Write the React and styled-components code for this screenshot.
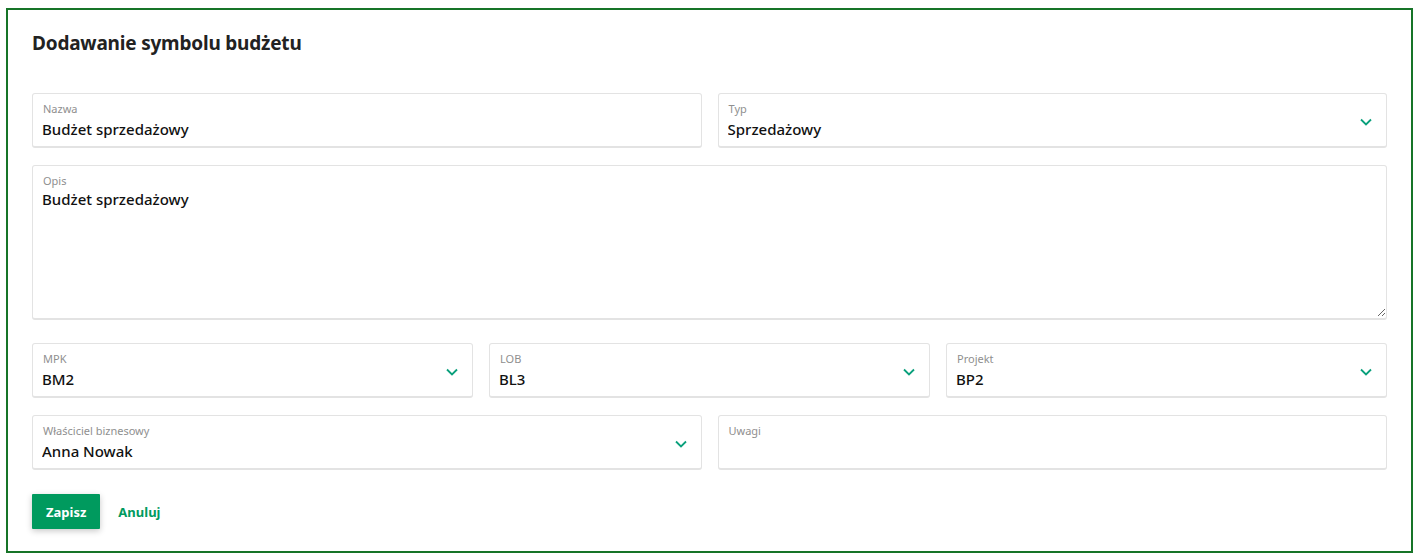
import React from 'react'
import styled, { createGlobalStyle } from 'styled-components'

const GlobalStyle = createGlobalStyle`
  body {
    margin: 0;
    background: #fff;
    font-family: "Noto Sans", "Liberation Sans", sans-serif;
    color: #1a1a1a;
  }
`

const Panel = styled.div`
  margin: 8px 6px 0 6px;
  border: 2px solid #177428;
  padding: 19px 24px 22px 24px;
  height: 545px;
  box-sizing: border-box;
`

const Title = styled.h2`
  margin: 0;
  font-size: 19px;
  line-height: 28px;
  font-weight: 700;
  color: #222;
  letter-spacing: -0.2px;
`

const Row = styled.div`
  display: grid;
  grid-template-columns: repeat(${p => p.cols}, 1fr);
  gap: 16px;
  margin-top: ${p => p.gap}px;
`

const Box = styled.label`
  position: relative;
  display: flex;
  flex-direction: column;
  height: ${p => p.h || 55}px;
  box-sizing: border-box;
  border: 1px solid #e3e3e3;
  border-bottom-width: 2px;
  border-radius: 3px;
  background: #fff;
  cursor: pointer;
`

const Label = styled.span`
  display: block;
  padding: 7px 10px 0 10px;
  font-size: 11px;
  line-height: 15px;
  color: #8f8f8f;
`

const Value = styled.input`
  border: none;
  outline: none;
  padding: 2px 40px 0 9px;
  font-family: inherit;
  font-size: 15px;
  font-weight: 500;
  line-height: 22px;
  color: #111;
  background: transparent;
  width: 100%;
  box-sizing: border-box;
  cursor: inherit;
`

const Area = styled.textarea`
  flex: 1;
  border: none;
  outline: none;
  padding: 0 9px;
  margin: 0 0 1px 0;
  font-family: inherit;
  font-size: 15px;
  font-weight: 500;
  line-height: 22px;
  color: #111;
  resize: vertical;
  background: transparent;
`

const Chevron = styled.svg`
  position: absolute;
  right: 14px;
  top: 24px;
  width: 12px;
  height: 8px;
`

const Actions = styled.div`
  display: flex;
  align-items: center;
  gap: 18px;
  margin-top: 24px;
`

const SaveButton = styled.button`
  height: 35px;
  padding: 0 14px;
  border: none;
  border-radius: 1px;
  background: #009a5e;
  color: #fff;
  font-family: inherit;
  font-size: 13px;
  font-weight: 700;
  box-shadow: 0 2px 6px rgba(0, 0, 0, 0.22);
  cursor: pointer;
`

const CancelButton = styled.button`
  border: none;
  background: none;
  padding: 0;
  color: #009a5e;
  font-family: inherit;
  font-size: 13px;
  font-weight: 700;
  cursor: pointer;
`

const Arrow = () => (
  <Chevron viewBox="0 0 12 8">
    <polyline points="1,1.5 6,6.5 11,1.5" fill="none" stroke="#0aa07c" strokeWidth="1.8" />
  </Chevron>
)

const Field = ({ label, value, select }) => (
  <Box>
    <Label>{label}</Label>
    <Value defaultValue={value} readOnly={select} />
    {select && <Arrow />}
  </Box>
)

const App = () => (
  <>
    <GlobalStyle />
    <Panel>
      <Title>Dodawanie symbolu budżetu</Title>
      <Row cols={2} gap={36}>
        <Field label="Nazwa" value="Budżet sprzedażowy" />
        <Field label="Typ" value="Sprzedażowy" select />
      </Row>
      <Row cols={1} gap={17}>
        <Box h={155}>
          <Label>Opis</Label>
          <Area defaultValue="Budżet sprzedażowy" />
        </Box>
      </Row>
      <Row cols={3} gap={23}>
        <Field label="MPK" value="BM2" select />
        <Field label="LOB" value="BL3" select />
        <Field label="Projekt" value="BP2" select />
      </Row>
      <Row cols={2} gap={17}>
        <Field label="Właściciel biznesowy" value="Anna Nowak" select />
        <Field label="Uwagi" value="" />
      </Row>
      <Actions>
        <SaveButton>Zapisz</SaveButton>
        <CancelButton>Anuluj</CancelButton>
      </Actions>
    </Panel>
  </>
)

export default App
